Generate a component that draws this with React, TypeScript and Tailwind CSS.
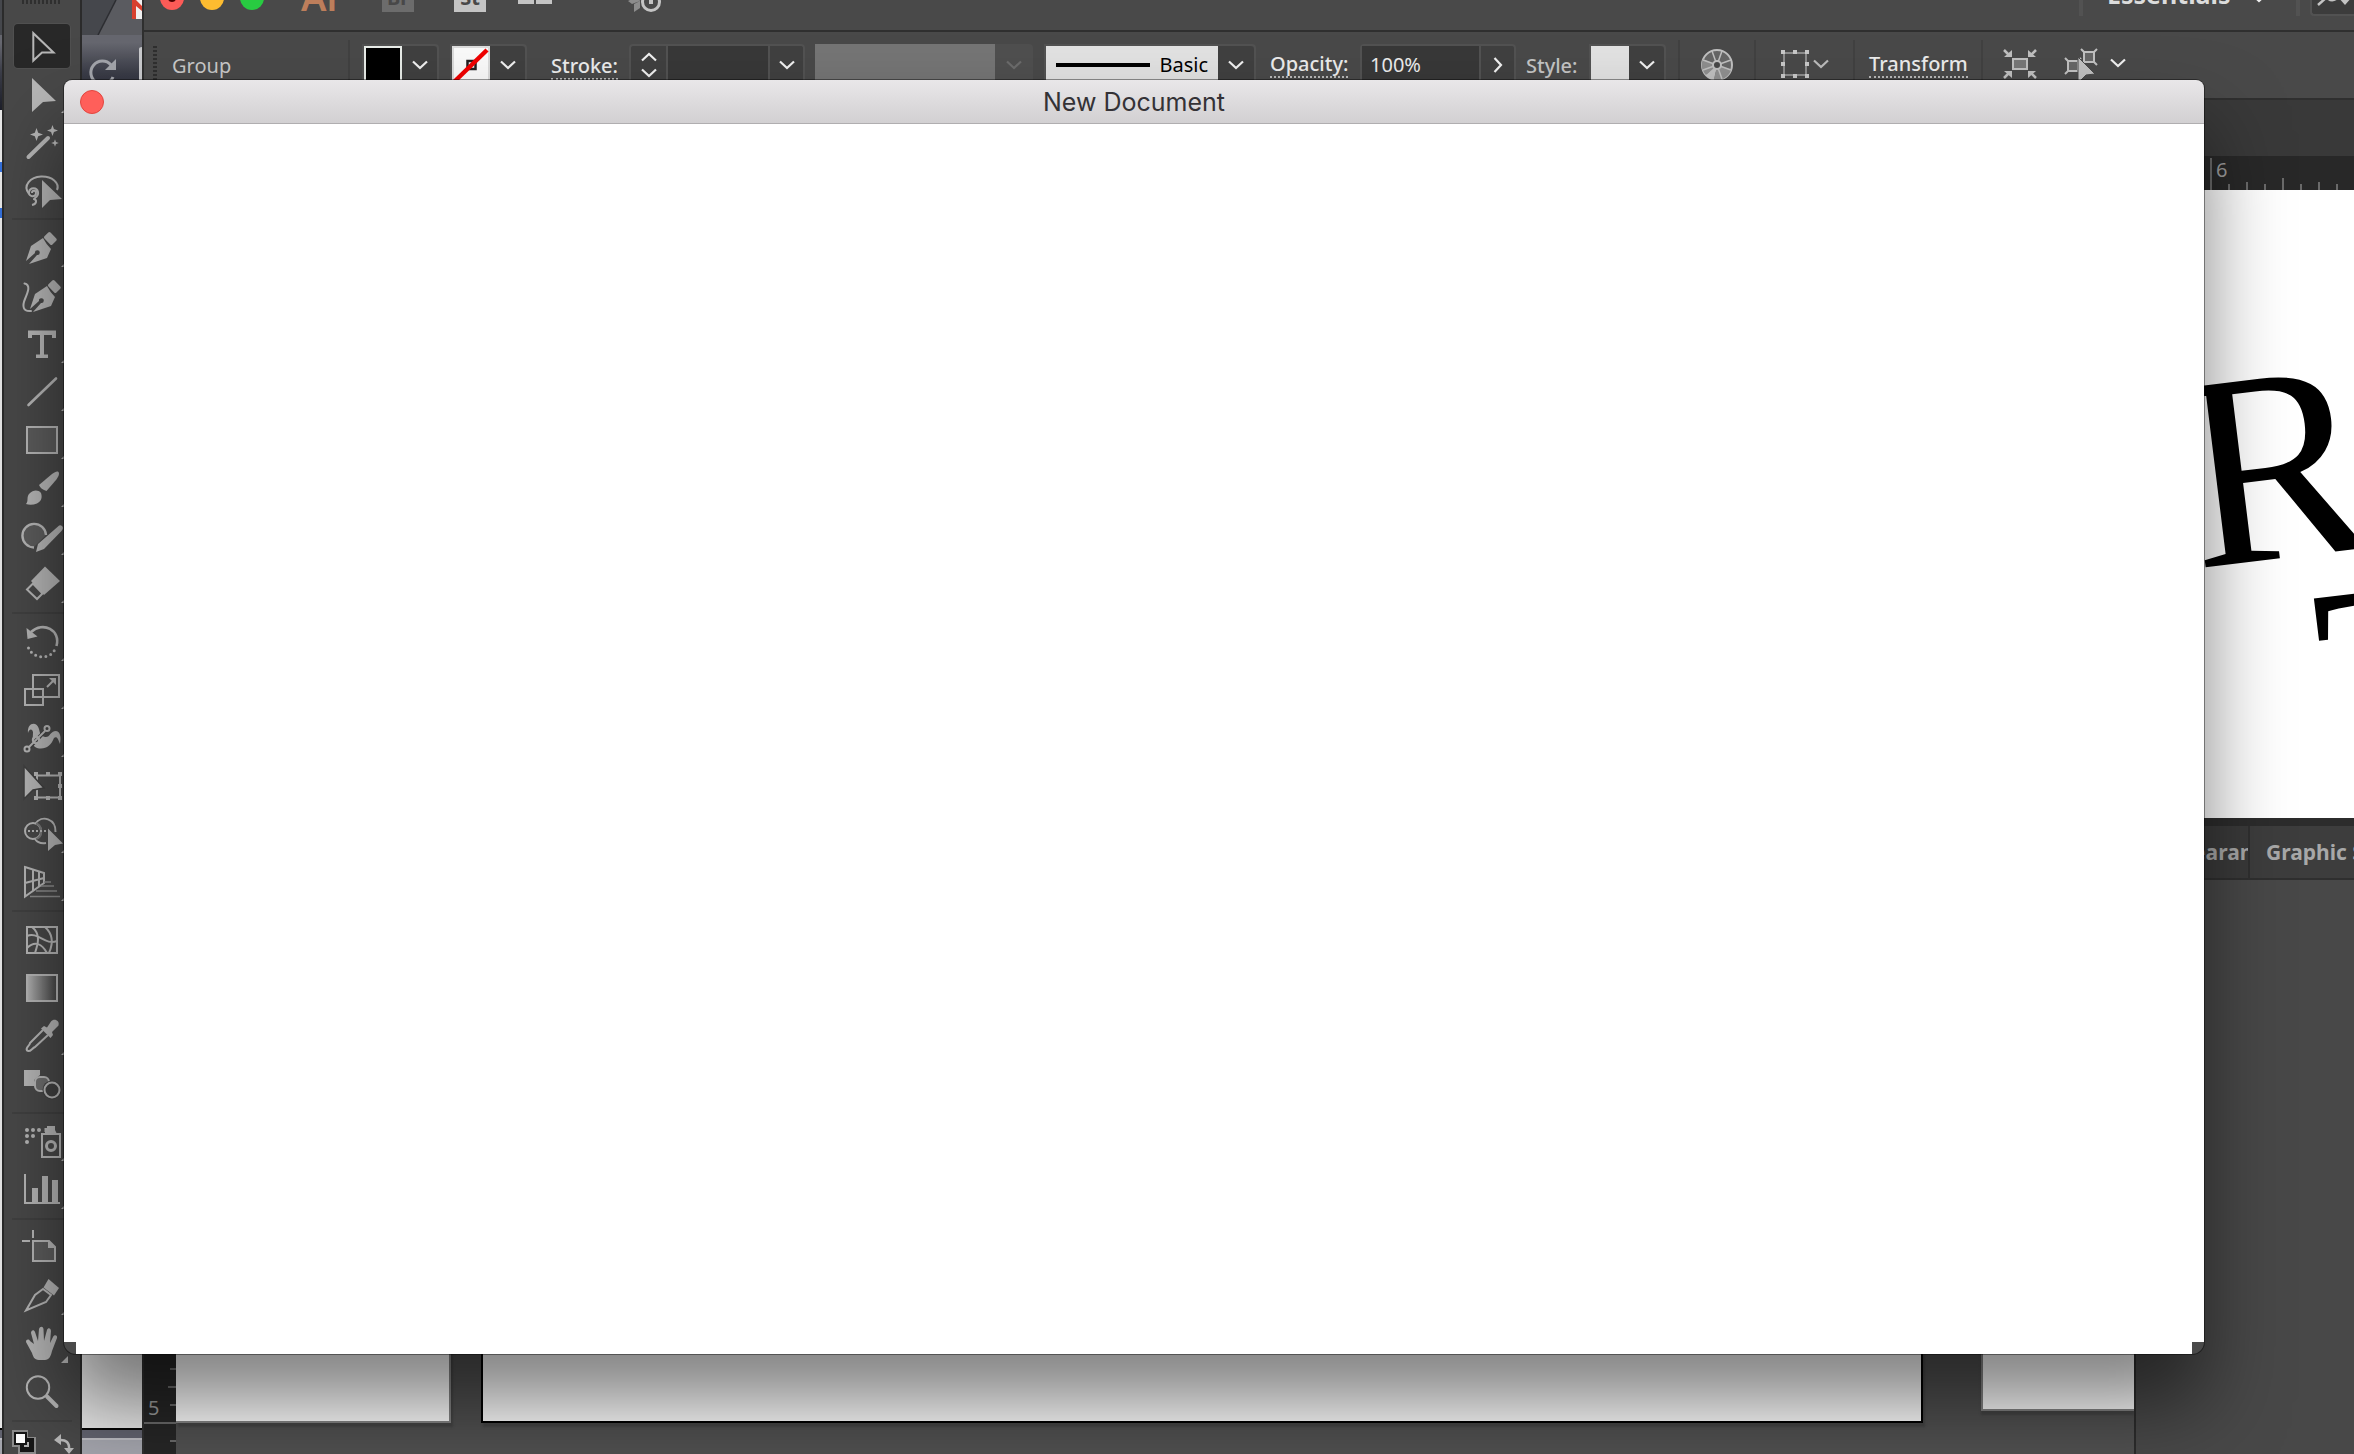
import type { ReactNode } from "react";

type Tool = { name: string; more?: boolean; icon: ReactNode };

const arrow = (x: number, y: number) => `M${x} ${y}l20 19l-12 1l-8 8z`;
const star = (x: number, y: number, r: number) => {
  const q = r * 0.26;
  return `M${x} ${y - r}L${x + q} ${y - q}L${x + r} ${y}L${x + q} ${y + q}L${x} ${y + r}L${x - q} ${y + q}L${x - r} ${y}L${x - q} ${y - q}z`;
};

const nib = (
  <>
    <path fill="currentColor" d="M26 37L31 22L43 14Q46 20 51 25L47 34L29 40L37 31A2.4 2.4 0 1 0 35 29z" />
    <rect fill="currentColor" x="44.5" y="10" width="11.5" height="8.5" rx="1.6" transform="rotate(46 50 14.5)" />
  </>
);

const groups: Tool[][] = [
  [
    { name: "Selection", icon: <path d="M33.3 11.2V38.6L42 30.6H53.5z" /> },
    { name: "Direct Selection", more: true, icon: <path fill="currentColor" stroke="none" d="M32 8L56 31L43 32L32 42z" /> },
    {
      name: "Magic Wand",
      icon: (
        <>
          <path strokeWidth="4" strokeLinecap="round" d="M28.5 39L48 20" />
          <path fill="currentColor" stroke="none" d={star(36.5, 16.5, 6.5)} />
          <path fill="currentColor" stroke="none" d={star(52.5, 12.5, 5.5)} />
          <path fill="currentColor" stroke="none" d={star(55, 25, 3.8)} />
        </>
      ),
    },
    {
      name: "Lasso",
      icon: (
        <>
          <path d="M29 28C22 19 31 11 41 10.5C52 10 60 17 57 24" />
          <path d="M38 26C37 21 30 21 29 26C28 31 36 32 36 27C36 24 32 24 32 27M38 26C39 31 34 32 34 33C37 34 37 38 32 39" />
          <path fill="currentColor" stroke="none" d={arrow(42, 14)} />
        </>
      ),
    },
  ],
  [
    { name: "Pen", more: true, icon: <g stroke="none">{nib}</g> },
    {
      name: "Curvature",
      icon: (
        <>
          <path strokeLinecap="round" d="M24.500 11.500C31 13 28 20 25 27C22 34 23 40 31 39" />
          <g stroke="none" transform="translate(4 0)">{nib}</g>
        </>
      ),
    },
    { name: "Type", more: true, icon: <path fill="currentColor" stroke="none" d="M28 10.500H56V18H52V15H44V34.500H48V38H36V34.500H40V15H32V18H28z" /> },
    { name: "Line Segment", more: true, icon: <path strokeWidth="2.600" strokeLinecap="round" d="M28.500 37L56 10.500" /> },
    { name: "Rectangle", more: true, icon: <rect x="27" y="11" width="30" height="26" fill="#5c5c5c" /> },
    {
      name: "Paintbrush",
      more: true,
      icon: (
        <g fill="currentColor" stroke="none">
          <path d="M58.500 8C60 10 58 13 56 16L46.500 27C43 26 40 24 39 21L52 10C55 8 57 7 58.500 8z" />
          <path d="M26 40C29 37 26 33 29.500 29.500C33 26 38 25.500 41 29C43 35 40 38 37 39.500C33 41 29 41 26 40z" />
        </g>
      ),
    },
    {
      name: "Shaper",
      more: true,
      icon: (
        <>
          <path fill="#5c5c5c" d="M46 23A11.500 11.500 0 1 0 34 35z" stroke="none" />
          <path strokeWidth="2.400" d="M46 23A11.800 11.800 0 1 0 34 35.500" />
          <path fill="currentColor" stroke="none" d="M62 14Q64 16 61.500 19L44 37L36 40L38 32L58 14.500Q60 12.500 62 14z" />
        </>
      ),
    },
    {
      name: "Eraser",
      more: true,
      icon: (
        <>
          <path fill="currentColor" stroke="none" d="M45 6.500L60 21L44 35L31 21z" />
          <path d="M33 23.500L27 29.500L37 39L42.500 33.500z" />
        </>
      ),
    },
  ],
  [
    {
      name: "Rotate",
      more: true,
      icon: (
        <>
          <path d="M31 14C43 3 61 12 56.500 28" strokeWidth="2.600" />
          <path fill="currentColor" stroke="none" d="M26.500 10L37.500 18.500L27.500 21z" />
          <path strokeWidth="3" strokeLinecap="round" strokeDasharray="0 5.200" d="M28.500 30C33 41 51 42 55 31" />
        </>
      ),
    },
    {
      name: "Scale",
      more: true,
      icon: (
        <>
          <rect x="33" y="9" width="26" height="22" />
          <rect x="25" y="23" width="18" height="16" />
          <path d="M47 21L53 15" />
          <path fill="currentColor" stroke="none" d="M49 12H56V19z" />
        </>
      ),
    },
    {
      name: "Warp",
      more: true,
      icon: (
        <>
          <path fill="currentColor" stroke="none" d="M28 19C27 8 37 7 39 15C40 20 41 22 45 23C50 24 50 17 56 17C61 18 61 24 60 30C58 25 57 22 54 24C51 32 45 36 37 34C31 32 33 25 33 18C32 14 29 15 28 19z" />
          <path stroke="#404040" strokeWidth="4" d="M29 34L46 16" />
          <path d="M29 33L45 17" />
          <circle cx="27" cy="35" r="2.500" fill="#424242" />
          <circle cx="47" cy="14.500" r="2.500" fill="#424242" />
          <circle cx="36" cy="26" r="3.200" />
        </>
      ),
    },
    {
      name: "Free Transform",
      icon: (
        <>
          <rect x="37" y="13.500" width="23" height="22" />
          <g fill="currentColor" stroke="none">
            <path d="M34 10h4v4h-4zM46 10h4v4h-4zM58 10h4v4h-4zM58 22h4v4h-4zM34 34h4v4h-4zM46 34h4v4h-4zM58 34h4v4h-4z" />
            <path stroke="#404040" strokeWidth="1.500" d="M24 4L44 26L33 28L24 37z" />
          </g>
        </>
      ),
    },
    {
      name: "Shape Builder",
      more: true,
      icon: (
        <>
          <path d="M35 14C42 4 56 9 55.500 22M46 33C40 34 37 32 35 29" />
          <circle cx="33" cy="21" r="8" />
          <path stroke="#777777" d="M36 13.500C43 16 43 27 36 29" />
          <path strokeDasharray="2 2" d="M28 21H47" />
          <path fill="currentColor" stroke="none" d="M48 18.500L63 33.500L55 35L48 41z" />
        </>
      ),
    },
    {
      name: "Perspective Grid",
      more: true,
      icon: (
        <>
          <path d="M25 9L44 15V25L25 38.500zM25 25L44 20M33 11.500V33M39 13.500V28" />
          <path stroke="#8c8c8c" d="M44 24H51M41 28H54M36 33H57M30 38.500H60" strokeWidth="1.600" />
        </>
      ),
    },
  ],
  [
    {
      name: "Mesh",
      icon: (
        <>
          <rect x="27" y="11" width="30" height="26" />
          <path d="M32 11C41 18 38 28 35 37M45 11C54 19 53 28 49 37M27 20C38 15 45 30 57 25M27 32C35 24 42 28 47 37" />
        </>
      ),
    },
    { name: "Gradient", icon: <rect x="27" y="11" width="30" height="26" fill="url(#toolGradient)" /> },
    {
      name: "Eyedropper",
      more: true,
      icon: (
        <>
          <path strokeLinejoin="round" d="M43 18L30 31C30 34 25 35 27 38.500C30 41 32 36 35 35L48 23" />
          <path fill="currentColor" stroke="none" d="M41 16.500L44 14L47 15.500L51 9.500C54 6 60 8.500 58.500 13.500L52 20L53 23L50.500 26z" />
        </>
      ),
    },
    {
      name: "Blend",
      icon: (
        <>
          <path fill="currentColor" stroke="none" d="M24 10H40V15L34 20V26H24z" />
          <rect x="35" y="17" width="14" height="14" rx="5" fill="#6d6d6d" />
          <circle cx="52" cy="30" r="9.500" fill="#404040" stroke="none" />
          <circle cx="52" cy="30" r="7.500" fill="#404040" />
        </>
      ),
    },
  ],
  [
    {
      name: "Symbol Sprayer",
      more: true,
      icon: (
        <>
          <g fill="currentColor" stroke="none">
            <circle cx="27" cy="12" r="2" />
            <circle cx="33" cy="12" r="2" />
            <circle cx="39" cy="12" r="2" />
            <circle cx="27" cy="18" r="2" />
            <circle cx="33" cy="18" r="2" />
            <circle cx="27" cy="24" r="2" />
            <path d="M47 8h8v4l2 4H45v-3l2-1zM44.500 10h3v4h-3z" />
          </g>
          <rect x="42" y="16" width="18" height="23" />
          <circle cx="51" cy="28" r="4.500" strokeWidth="3" />
        </>
      ),
    },
    {
      name: "Column Graph",
      more: true,
      icon: (
        <>
          <path d="M25 8V37H60" />
          <path fill="currentColor" stroke="none" d="M32 22h6v15h-6zM42 10h6v27h-6zM52 14h6v23h-6z" />
        </>
      ),
    },
  ],
  [
    {
      name: "Artboard",
      icon: (
        <>
          <path d="M33 6V14M22 17H30" />
          <path fill="#5c5c5c" d="M33 17H49L55 23V37H33z" />
          <path fill="currentColor" stroke="none" d="M48 16V24H56z" />
        </>
      ),
    },
    {
      name: "Slice",
      more: true,
      icon: (
        <>
          <path d="M43 17L35 23L26 38.500L46 30L51 23z" />
          <path fill="currentColor" stroke="none" d="M48.500 7L59 16L54 23.500L43.500 15.500z" />
        </>
      ),
    },
    {
      name: "Hand",
      more: true,
      icon: (
        <>
          <path
            fill="currentColor"
            stroke="none"
            d="M26 22C26 19 29 19 30 21L34 24L31 13C31 10 34 9 35 12L38 21L39 9C40 6 43 6 43.500 9L44 21L47 10C48 7 51 8 51 11L50 23L53 17C54 14 58 15 57 18L52 31C51 36 49 40 45 40H39C34 40 33 36 32 33z"
          />
        </>
      ),
    },
    {
      name: "Zoom",
      icon: (
        <>
          <circle cx="38" cy="19.500" r="11.200" />
          <path strokeWidth="4" strokeLinecap="round" d="M47 28.500L56.500 38" />
        </>
      ),
    },
  ],
];

function ToolButton({ tool, active }: { tool: Tool; active: boolean }) {
  return (
    <button type="button" aria-label={tool.name} className="flex h-12 w-14 items-center text-[#b6b6b6]">
      <span className={active ? "block h-11 w-14 rounded bg-[#282828] ring-1 ring-[#505050]" : "block h-11 w-14"}>
        <svg viewBox="14 2 56 44" className="h-11 w-14" fill="none" stroke="currentColor" strokeWidth="2">
          {tool.icon}
          {tool.more && <path fill="currentColor" stroke="none" d="M68 36V43H61z" />}
        </svg>
      </span>
    </button>
  );
}

function Toolbar() {
  return (
    <aside className="absolute inset-y-0 left-0.5 z-10 w-20 overflow-hidden border-x-2 border-[#2b2b2b] bg-[#484848]">
      <svg width="0" height="0" className="absolute">
        <defs>
          <linearGradient id="toolGradient">
            <stop offset="0" stopColor="#b4b4b4" />
            <stop offset="1" stopColor="#444444" />
          </linearGradient>
        </defs>
      </svg>
      <div className="flex h-[22px] justify-center">
        <div className="h-1 w-10 bg-[repeating-linear-gradient(90deg,#2f2f2f_0_2px,#484848_2px_4px)]" />
      </div>
      <div className="flex flex-col items-center gap-1">
        {groups.map((group, g) => (
          <div key={g} className="flex flex-col items-center gap-1">
            {g > 0 && <div className="h-0.5 w-15 bg-[#404040]" />}
            <div className="flex flex-col">
              {group.map((tool, i) => (
                <ToolButton key={tool.name} tool={tool} active={g === 0 && i === 0} />
              ))}
            </div>
          </div>
        ))}
        <div className="h-0.5 w-15 bg-[#404040]" />
      </div>
      <div className="mt-2 flex justify-between pr-1 pl-2">
        <button type="button" aria-label="Default Fill and Stroke">
          <svg viewBox="0 0 24 24" className="size-6">
            <path fill="#8c8c8c" d="M0 0H16V7H24V24H6V17H0z" />
            <path fill="#161616" d="M8 8H22V22H8z" />
            <path fill="#b4b4b4" d="M12 12H17V17H12z" />
            <path fill="#161616" d="M2 2H15V15H2z" />
            <path fill="#ffffff" d="M4 4H13V13H4z" />
          </svg>
        </button>
        <button type="button" aria-label="Swap Fill and Stroke">
          <svg viewBox="0 0 24 24" className="size-6">
            <path fill="none" stroke="#b8b8b8" strokeWidth="2.500" d="M7 10Q18 9 17 20" />
            <path fill="#b8b8b8" d="M2 10L9 4V15zM12 18H22L17 24z" />
          </svg>
        </button>
      </div>
    </aside>
  );
}

function Browser() {
  return (
    <div className="absolute inset-y-0 left-0 flex w-[142px] flex-col bg-[#e8e8e8]">
      <div className="flex h-[35px] justify-end bg-[#45474c]">
        <svg viewBox="0 0 60 35" className="h-[35px] w-[60px]">
          <path fill="#5a5b60" d="M34 0H60V35H16z" />
          <path stroke="#2c2d31" strokeWidth="1.500" d="M34 0L16 35" />
          <path fill="#f0f0f0" d="M50 0H60V19H50z" />
          <path fill="#d8402f" d="M50 0H54L60 6V11L54 6V19H50z" />
        </svg>
      </div>
      <div className="flex h-[75px] justify-end bg-linear-to-b from-[#66676f] from-10% via-[#3b3d48] via-50% to-[#1d1f2a]">
        <svg viewBox="0 0 60 60" className="size-[60px]">
          <path fill="none" stroke="#a3a5ab" strokeWidth="3" d="M29 30A11.500 11.500 0 1 0 31 42" />
          <path fill="#a3a5ab" d="M34 24V35H23z" />
          <path fill="#c9cacd" d="M57 14Q57 12 60 12V60H57z" />
        </svg>
      </div>
      <div className="mt-[52px] h-2.5 w-0.5 bg-[#3470dc]" />
      <div className="mt-[36px] h-2.5 w-0.5 bg-[#3470dc]" />
      <div className="grow" />
      <div className="h-[26px] border-t-2 border-[#050505] bg-[#62636f]">
        <div className="mt-2 h-4 border-t-2 border-[#bcbcc2] bg-[#a4a5ad]" />
      </div>
    </div>
  );
}

function Chevron({ className = "text-[#f0f0f0]" }: { className?: string }) {
  return (
    <svg viewBox="0 0 16 10" className={`h-2.5 w-4 ${className}`} fill="none" stroke="currentColor" strokeWidth="2.200">
      <path d="M1 1.500L8 8L15 1.500" />
    </svg>
  );
}

function DropButton({ label }: { label: string }) {
  return (
    <button type="button" aria-label={label} className="flex grow items-center justify-center rounded-r bg-[#404040]">
      <Chevron />
    </button>
  );
}

function TitleBar() {
  return (
    <header className="flex h-16 shrink-0 items-center pl-4">
      <div className="flex w-[141px] gap-4">
        <button type="button" aria-label="Close" className="flex size-6 items-center justify-center rounded-full bg-[#fc5b57]">
          <span className="size-2 rounded-full bg-[#4d0000]" />
        </button>
        <button type="button" aria-label="Minimize" className="size-6 rounded-full bg-[#fdbc30]" />
        <button type="button" aria-label="Full Screen" className="size-6 rounded-full bg-[#28cb41]" />
      </div>
      <span className="w-[81px] pb-1 text-[38px] leading-none font-semibold text-[#bd7e5b]">Ai</span>
      <button type="button" className="mr-10 h-7 w-8 bg-[#6c6c6c] text-xl leading-6 font-bold text-[#484848]">
        Br
      </button>
      <button type="button" className="mr-8 h-7 w-8 bg-[#c4c4c4] text-xl leading-6 font-bold text-[#484848]">
        St
      </button>
      <button type="button" aria-label="Arrange Documents" className="mr-[76px] grid h-3 w-[34px] grid-cols-2 gap-0.5">
        <span className="bg-[#c4c4c4]" />
        <span className="bg-[#c4c4c4]" />
      </button>
      <button type="button" aria-label="GPU Performance">
        <svg viewBox="0 0 34 28" className="h-7 w-[34px]">
          <path fill="#8c8c8c" d="M0 17L10 12L12 17L4 20zM6 20L12 17V24L6 28z" />
          <circle cx="23" cy="18" r="8.500" fill="none" stroke="#c4c4c4" strokeWidth="3" />
          <path stroke="#c4c4c4" strokeWidth="4" d="M23 12V20" />
        </svg>
      </button>
      <div className="ml-auto flex h-9 items-center">
        <div className="h-full w-1 bg-[#525252]" />
        <button type="button" className="flex h-9 w-[213px] items-center pl-6 text-[25px] font-bold text-[#dcdcdc]">
          <span className="w-[144px] pb-1.5 text-left">Essentials</span>
          <Chevron />
        </button>
        <div className="h-full w-1 bg-[#525252]" />
        <button
          type="button"
          aria-label="Search Adobe Stock"
          className="ml-2.5 h-9 w-11 rounded-bl border-2 border-r-0 border-[#525252] bg-[#3c3c3c]"
        >
          <svg viewBox="0 0 44 32" className="h-8 w-11">
            <path stroke="#c4c4c4" strokeWidth="2.500" d="M6 23L15 15" />
            <path fill="none" stroke="#c4c4c4" strokeWidth="2.500" d="M14 8A7 7 0 0 0 24 17" />
            <path fill="#c4c4c4" d="M26 15L33 23L40 15z" />
          </svg>
        </button>
      </div>
    </header>
  );
}

const dotted = "border-b-2 border-dotted border-[#b8b8b8]";

function ControlBar() {
  return (
    <div className="flex h-[70px] shrink-0 items-start border-y-2 border-[#2f2f2f] pt-2 pl-[9px] text-xl text-[#ececec]">
      <div className="mt-1.5 mr-[15px] h-[38px] w-1 bg-[repeating-linear-gradient(#2f2f2f_0_2px,#484848_2px_4px)]" />
      <span className="mt-1 w-[176px] pt-1.5 leading-8 text-[#c8c8c8]">Group</span>
      <div className="mr-3 h-[50px] w-0.5 bg-[#414141]" />

      <div className="mt-1 mr-[11px] flex h-[42px] w-[77px] rounded-r border-2 border-[#525252]">
        <button type="button" aria-label="Fill" className="h-[38px] w-[38px] border-2 border-[#e8ece8] bg-black" />
        <DropButton label="Fill options" />
      </div>
      <div className="mt-1 mr-6 flex h-[42px] w-[77px] rounded-r border-2 border-[#525252]">
        <button type="button" aria-label="Stroke color" className="h-[38px] w-[38px]">
          <svg viewBox="0 0 38 38" className="size-[38px]">
            <path fill="#dcdcdc" d="M0 0H38V38H0z" />
            <path fill="#fafafa" d="M2 2H36V38H2z" />
            <path fill="none" stroke="#231f20" strokeWidth="2.500" d="M15.500 15H23.500V23H15.500z" />
            <path stroke="#f00000" strokeWidth="4.500" d="M2 36L35 4" />
          </svg>
        </button>
        <DropButton label="Stroke options" />
      </div>

      <div className="mt-1 w-[78px]">
        <label htmlFor="stroke" className={`inline-block pt-2.5 leading-6 font-medium ${dotted}`}>
          Stroke:
        </label>
      </div>
      <div className="mt-1 mr-2.5 flex h-[42px] w-[176px] rounded border-2 border-[#525252] bg-[#404040]">
        <div className="flex w-[35px] flex-col items-center justify-between py-1.5">
          <button type="button" aria-label="Increase stroke" className="flex rotate-180">
            <Chevron />
          </button>
          <button type="button" aria-label="Decrease stroke" className="flex">
            <Chevron />
          </button>
        </div>
        <input id="stroke" className="w-[104px] border-x-2 border-[#525252] bg-[#383838]" />
        <DropButton label="Stroke weights" />
      </div>

      <div className="mt-1 mr-[11px] flex h-[42px] w-[218px] rounded bg-[#4f4f4f]">
        <div className="w-[180px] bg-[#757575]" />
        <button type="button" aria-label="Variable width profile" disabled className="flex grow items-center justify-center">
          <Chevron className="text-[#6c6c6c]" />
        </button>
      </div>

      <div className="mt-1 mr-[14px] flex h-[42px] w-[212px] rounded-r border-2 border-[#525252]">
        <button type="button" className="flex w-[172px] items-center justify-between bg-[#e2e2e2] pr-2.5 pl-2.5 text-black">
          <span className="h-1 w-[94px] bg-black" />
          Basic
        </button>
        <DropButton label="Brush definition" />
      </div>

      <div className="mt-1 w-[90px]">
        <label htmlFor="opacity" className={`inline-block pt-2 leading-6 font-medium ${dotted}`}>
          Opacity:
        </label>
      </div>
      <div className="mt-1 mr-2.5 flex h-[42px] w-[156px] rounded border-2 border-[#525252] bg-[#404040]">
        <input id="opacity" defaultValue="100%" className="w-[119px] border-r-2 border-[#525252] bg-[#383838] pl-2" />
        <button type="button" aria-label="Opacity slider" className="flex grow items-center justify-center">
          <span className="-rotate-90">
            <Chevron />
          </span>
        </button>
      </div>
      <span className="mt-1 w-[63px] pt-1.5 leading-8 font-medium text-[#c4c4c4]">Style:</span>
      <div className="mt-1 mr-3 flex h-[42px] w-[77px] rounded-r border-2 border-[#525252]">
        <button type="button" aria-label="Graphic style" className="h-[38px] w-[38px] bg-[#e2e2e2]" />
        <DropButton label="Style options" />
      </div>

      <div className="mr-5 h-[50px] w-0.5 bg-[#414141]" />
      <button type="button" aria-label="Recolor Artwork" className="mt-2 mr-5">
        <svg viewBox="0 0 34 34" className="size-[34px]">
          <circle cx="17" cy="17" r="15" fill="#666666" stroke="#c0c0c0" strokeWidth="2" />
          <path fill="#8e8e8e" d="M17 17L3 11A15 15 0 0 0 6 27z" />
          <path fill="#c0c0c0" d="M17 17L6 27A15 15 0 0 0 14 32z" />
          <path fill="#909090" d="M17 17L14 32A15 15 0 0 0 31 22z" />
          <path stroke="#c0c0c0" strokeWidth="1.500" d="M12 3L22 31M22 3L12 31M3 12L31 22M3 22L31 12" />
          <circle cx="17" cy="17" r="4" fill="#484848" stroke="#c0c0c0" strokeWidth="2" />
        </svg>
      </button>
      <div className="mr-[25px] h-[50px] w-0.5 bg-[#414141]" />
      <button type="button" aria-label="Align" className="mt-2.5 mr-6 flex items-center gap-1 text-[#bcbcbc]">
        <svg viewBox="0 0 28 28" className="size-7">
          <path fill="none" stroke="#8c8c8c" strokeWidth="2" d="M3 3H25V25H3z" />
          <path fill="#c8c8c8" d="M0 0h4v4H0zM12 0h4v4h-4zM24 0h4v4h-4zM0 12h4v4H0zM24 12h4v4h-4zM0 24h4v4H0zM12 24h4v4h-4zM24 24h4v4h-4z" />
        </svg>
        <Chevron className="text-[#bcbcbc]" />
      </button>
      <div className="mr-3.5 h-[50px] w-0.5 bg-[#414141]" />
      <div className="mt-1 w-[112px]">
        <button type="button" className={`inline-block pt-2 leading-6 font-medium ${dotted}`}>
          Transform
        </button>
      </div>
      <div className="mr-5 h-[50px] w-0.5 bg-[#414141]" />
      <button type="button" aria-label="Isolate Selected Object" className="mt-2 mr-[27px]">
        <svg viewBox="0 0 34 32" className="h-8 w-[34px]" fill="none" stroke="#c0c0c0" strokeWidth="2">
          <path fill="#777777" d="M10 11H24V21H10z" />
          <path strokeWidth="2.500" d="M1 2L7 8M33 2L27 8M1 30L7 24M33 30L27 24" />
          <path fill="#c0c0c0" stroke="none" d="M9 2V9H1zM25 2V9H33zM9 30V23H1zM25 30V23H33z" />
        </svg>
      </button>
      <button type="button" aria-label="Select Similar Objects" className="mt-2 mr-3">
        <svg viewBox="0 0 34 34" className="size-[34px]" fill="none" stroke="#c0c0c0" strokeWidth="2">
          <path fill="#666666" d="M4 13H14V23H4zM20 4H30V14H20z" />
          <path d="M1 10L4 13M1 26L4 23M17 1L20 4M33 1L30 4M33 17L30 14M17 10L14 13M17 17L20 14" />
          <path fill="#c0c0c0" stroke="#484848" strokeWidth="1" d="M14 9L31 26L22 27L14 35z" />
        </svg>
      </button>
      <button type="button" aria-label="Select options" className="mt-[18px] flex">
        <Chevron />
      </button>
    </div>
  );
}

const topTicks = ["h-1.5", "h-2", "h-1.5", "h-3", "h-1.5", "h-2", "h-1.5"];
const sideTicks = ["w-1.5", "w-2", "w-1.5"];

function Workspace() {
  return (
    <div className="flex min-h-0 grow flex-col">
      <div className="h-14 shrink-0 bg-[#393939]" />
      <div className="flex h-[34px] shrink-0 justify-end overflow-hidden bg-[#282828]">
        <div className="mt-0.5 flex h-8 w-[144px] items-end gap-4 text-xl text-[#9c9c9c]">
          <div className="relative h-8 w-0.5 shrink-0 bg-[#6a6a6a]">
            <span className="absolute top-0 left-1.5 leading-6">6</span>
          </div>
          {topTicks.map((height, i) => (
            <div key={i} className={`w-0.5 shrink-0 bg-[#6a6a6a] ${height}`} />
          ))}
        </div>
      </div>
      <div className="flex min-h-0 grow">
        <div className="flex w-8 shrink-0 flex-col items-end justify-end gap-4 bg-[#262626] pb-3 text-xl text-[#9c9c9c]">
          {sideTicks.map((width, i) => (
            <div key={i} className={`h-0.5 bg-[#6a6a6a] ${width}`} />
          ))}
          <div className="relative h-0.5 w-full bg-[#6a6a6a]">
            <span className="absolute bottom-0.5 left-1 leading-7">5</span>
          </div>
          <div className="h-0.5 w-1.5 bg-[#6a6a6a]" />
        </div>
        <main className="relative grow overflow-hidden bg-[#505050]">
          <section className="absolute top-0 right-0 h-[640px] w-[420px] overflow-hidden bg-white">
            <span className="absolute top-[137px] left-[250px] -rotate-7 font-[Liberation_Serif] text-[276px] leading-none text-black">R</span>
            <span className="absolute top-[348px] left-[385px] -rotate-7 font-[Liberation_Serif] text-[276px] leading-none text-black">T</span>
          </section>
          <section className="absolute bottom-[31px] left-0 h-80 w-[275px] border-r-2 border-b-2 border-[#858585] bg-white shadow-[2px_4px_2px_#444444]" />
          <section className="absolute right-[431px] bottom-[31px] left-[305px] h-80 border-2 border-black bg-white shadow-[2px_4px_2px_#444444]" />
          <section className="absolute right-[220px] bottom-[43px] h-80 w-[153px] border-b-2 border-l-2 border-[#858585] bg-white shadow-[0_4px_2px_#444444]" />
          <aside className="absolute right-0 bottom-0 h-[636px] w-[220px] overflow-hidden border-t-8 border-l-2 border-[#2c2c2c] bg-[#484848]">
            <div className="flex h-[54px] items-center border-b-2 border-[#2f2f2f] bg-[#3d3d3d] text-[21px] font-bold whitespace-nowrap text-[#a8a8a8]">
              <button type="button" className="h-full w-[114px] shrink-0 overflow-hidden border-r-2 border-[#2f2f2f] bg-[#3a3a3a] pt-0.5 pl-4 text-left">
                Appearan
              </button>
              <button type="button" className="h-full shrink-0 pt-0.5 pl-4">
                Graphic Styles
              </button>
            </div>
          </aside>
        </main>
      </div>
    </div>
  );
}

function NewDocumentDialog() {
  return (
    <div
      role="dialog"
      aria-labelledby="dialog-title"
      className="absolute top-20 right-[150px] bottom-[100px] left-16 z-20 flex flex-col rounded-t-lg rounded-b-xl bg-[#4a4a4a] shadow-[0_0_0_1px_rgba(0,0,0,0.4),0_50px_80px_rgba(0,0,0,0.5)]"
    >
      <div className="grid h-11 shrink-0 grid-cols-[1fr_auto_1fr] items-center rounded-t-lg border-b border-[#b0aeb0] bg-linear-to-b from-[#e9e7e9] to-[#d2d0d2] px-4">
        <button type="button" aria-label="Close dialog" className="size-6 rounded-full border border-[#e2463f] bg-[#ff5f5a]" />
        <h1 id="dialog-title" className="pt-0.5 font-[Inter] text-[25px] text-[#343236]">
          New Document
        </h1>
      </div>
      <div className="grow bg-white" />
      <div className="mx-3 h-3 bg-white" />
    </div>
  );
}

export default function App() {
  return (
    <div className="relative h-screen overflow-hidden bg-[#484848] font-['Noto_Sans',sans-serif]">
      <Browser />
      <div className="absolute -top-[34px] right-0 bottom-0 left-[142px] flex flex-col border-l-2 border-[#2f2f2f] bg-[#494949]">
        <TitleBar />
        <ControlBar />
        <Workspace />
      </div>
      <Toolbar />
      <NewDocumentDialog />
    </div>
  );
}
